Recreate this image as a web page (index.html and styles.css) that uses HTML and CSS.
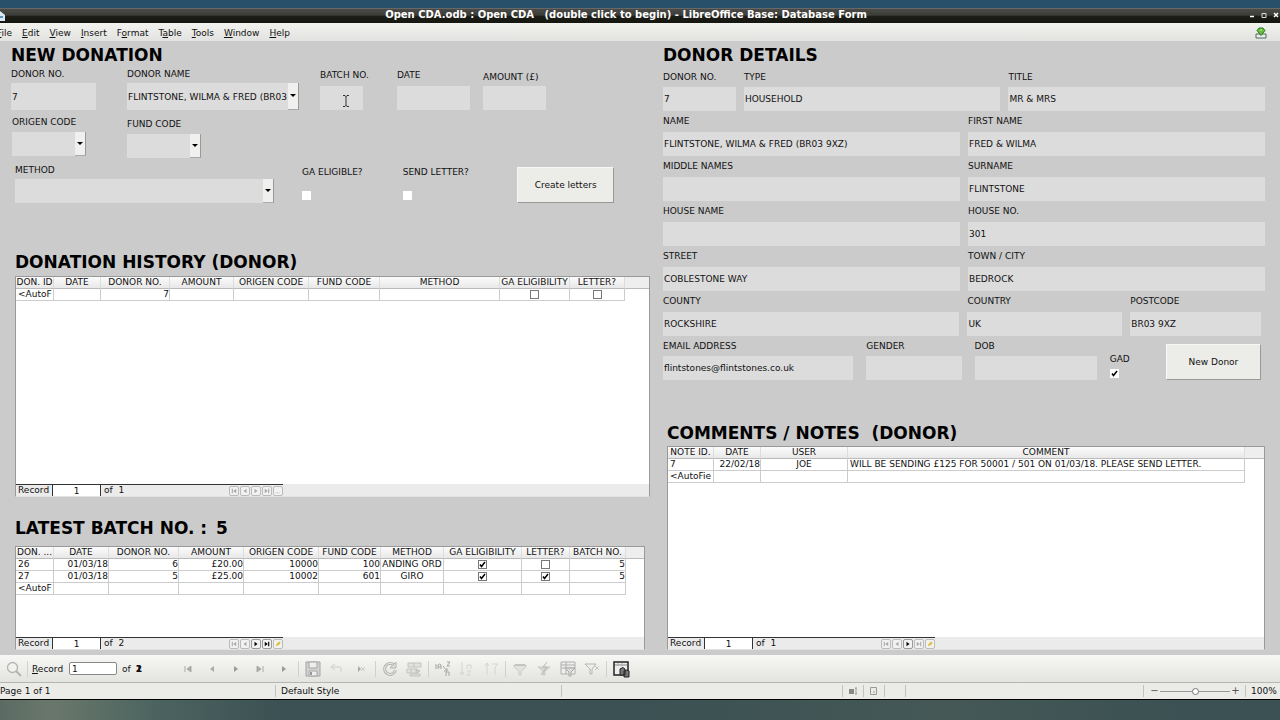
FILE: index.html
```html
<!DOCTYPE html>
<html lang="en">
<head>
<meta charset="utf-8">
<title>Open CDA</title>
<link rel="stylesheet" href="styles.css">
</head>
<body>
<svg class="defs" width="0" height="0" aria-hidden="true">
  <symbol id="first" viewBox="0 0 8 8"><path d="M1 1h1.500v6H1zM7 1v6L3 4z" fill="currentColor"/></symbol>
  <symbol id="prev" viewBox="0 0 8 8"><path d="M6 1v6L2 4z" fill="currentColor"/></symbol>
  <symbol id="next" viewBox="0 0 8 8"><path d="M2 1v6l4-3z" fill="currentColor"/></symbol>
  <symbol id="last" viewBox="0 0 8 8"><path d="M1 1v6l4-3zM5.500 1H7v6H5.500z" fill="currentColor"/></symbol>
  <symbol id="new" viewBox="0 0 8 8"><path d="M1 7l1-3 3-3h2v3L4 6z" fill="#dcc144"/></symbol>
  <symbol id="dots" viewBox="0 0 8 8"><path d="M1 6h1v1H1zM3 6h1v1H3zM5 6h1v1H5z" fill="currentColor"/></symbol>
</svg>

<header class="titlebar">
  <svg class="app-icon" viewBox="0 0 12 12" aria-hidden="true"><path d="M0 1l5 4v6H0z" fill="#dbe9f3"/><path d="M0 6h3v2H0z" fill="#5c93bb"/></svg>
  <h1 class="title">Open CDA.odb : Open CDA&nbsp;&nbsp; (double click to begin) - LibreOffice Base: Database Form</h1>
  <div class="window-buttons">
    <button aria-label="Minimise"><svg viewBox="0 0 8 8"><path d="M2 5.500h4" stroke="#fff" stroke-width="1.500"/></svg></button>
    <button aria-label="Maximise"><svg viewBox="0 0 8 8"><path d="M2 2.500h4v4H2z" fill="none" stroke="#ddd"/></svg></button>
    <button aria-label="Close"><svg viewBox="0 0 8 8"><path d="M2 2l4 4M6 2L2 6" stroke="#fff" stroke-width="1.500"/></svg></button>
  </div>
</header>

<nav class="menubar">
  <button><u>F</u>ile</button><button><u>E</u>dit</button><button><u>V</u>iew</button><button><u>I</u>nsert</button><button>F<u>o</u>rmat</button><button>T<u>a</u>ble</button><button><u>T</u>ools</button><button><u>W</u>indow</button><button><u>H</u>elp</button>
  <button class="update" aria-label="Updates"><svg viewBox="0 0 12 12"><path d="M1 7h10v4H1z" fill="#e9eee9" stroke="#4d6b62"/><path d="M4 1h4l2 2.500L6 8.500 2 3.500z" fill="#67bd3b" stroke="#2b7a28"/><path d="M5 3h2" stroke="#c7f2a0"/></svg></button>
</nav>

<main class="form">
  <section class="left">
    <h2>NEW DONATION</h2>
    <div class="row row-a">
      <div class="field f-no"><label for="dn">DONOR NO.</label><input class="tall" id="dn" value="7"></div>
      <div class="field f-name"><label for="dname">DONOR NAME</label><div class="combo tall"><select id="dname"><option>FLINTSTONE, WILMA &amp; FRED (BR03 9XZ)</option></select></div></div>
      <div class="field f-batch high"><label for="batch">BATCH NO.</label><input id="batch"><svg class="ibeam" viewBox="0 0 6 12" aria-hidden="true"><path d="M0 .5h2l1 1 1-1h2M3 1v10M0 11.500h2l1-1 1 1h2" fill="none" stroke="#333"/></svg></div>
      <div class="field f-date high"><label for="date">DATE</label><input id="date"></div>
      <div class="field f-amount"><label for="amount">AMOUNT (£)</label><input id="amount"></div>
    </div>
    <div class="row row-b">
      <div class="field f-origen"><label for="origen">ORIGEN CODE</label><div class="combo"><select id="origen"><option></option></select></div></div>
      <div class="field f-fund"><label for="fund">FUND CODE</label><div class="combo"><select id="fund"><option></option></select></div></div>
    </div>
    <div class="row row-c">
      <div class="field f-method"><label for="method">METHOD</label><div class="combo"><select id="method"><option></option></select></div></div>
      <div class="field f-ga"><label for="ga">GA ELIGIBLE?</label><input type="checkbox" id="ga"></div>
      <div class="field f-send"><label for="send">SEND LETTER?</label><input type="checkbox" id="send"></div>
      <button class="push f-create">Create letters</button>
    </div>

    <h2 class="history-title">DONATION HISTORY (DONOR)</h2>
    <div class="grid-panel history">
      <table>
        <thead><tr><th>DON. ID</th><th>DATE</th><th>DONOR NO.</th><th>AMOUNT</th><th>ORIGEN CODE</th><th>FUND CODE</th><th>METHOD</th><th>GA ELIGIBILITY</th><th>LETTER?</th><th></th></tr></thead>
        <tbody><tr><td>&lt;AutoF</td><td></td><td class="num">7</td><td></td><td></td><td></td><td></td><td class="mid"><input type="checkbox" aria-label="GA eligibility"></td><td class="mid"><input type="checkbox" aria-label="Letter"></td><td></td></tr></tbody>
      </table>
      <div class="record-bar"><div class="record-in">
        <label for="r1">Record</label><input id="r1" value="1"><span>of&nbsp; 1</span>
        <div class="record-nav"><button aria-label="First"><svg><use href="#first"/></svg></button><button aria-label="Previous"><svg><use href="#prev"/></svg></button><button aria-label="Next"><svg><use href="#next"/></svg></button><button aria-label="Last"><svg><use href="#last"/></svg></button><button aria-label="New"><svg><use href="#dots"/></svg></button></div>
      </div></div>
    </div>

    <h2 class="batch-title">LATEST BATCH NO. : <span>5</span></h2>
    <div class="grid-panel batch">
      <table>
        <thead><tr><th>DON. ...</th><th>DATE</th><th>DONOR NO.</th><th>AMOUNT</th><th>ORIGEN CODE</th><th>FUND CODE</th><th>METHOD</th><th>GA ELIGIBILITY</th><th>LETTER?</th><th>BATCH NO.</th><th></th></tr></thead>
        <tbody>
          <tr><td>26</td><td class="num">01/03/18</td><td class="num">6</td><td class="num">£20.00</td><td class="num">10000</td><td class="num">100</td><td class="mid">ANDING ORD</td><td class="mid"><input type="checkbox" checked aria-label="GA eligibility"></td><td class="mid"><input type="checkbox" aria-label="Letter"></td><td class="num">5</td><td></td></tr>
          <tr><td>27</td><td class="num">01/03/18</td><td class="num">5</td><td class="num">£25.00</td><td class="num">10002</td><td class="num">601</td><td class="mid">GIRO</td><td class="mid"><input type="checkbox" checked aria-label="GA eligibility"></td><td class="mid"><input type="checkbox" checked aria-label="Letter"></td><td class="num">5</td><td></td></tr>
          <tr><td>&lt;AutoF</td><td></td><td></td><td></td><td></td><td></td><td></td><td></td><td></td><td></td><td></td></tr>
        </tbody>
      </table>
      <div class="record-bar"><div class="record-in">
        <label for="r2">Record</label><input id="r2" value="1"><span>of&nbsp; 2</span>
        <div class="record-nav"><button aria-label="First"><svg><use href="#first"/></svg></button><button aria-label="Previous"><svg><use href="#prev"/></svg></button><button class="on" aria-label="Next"><svg><use href="#next"/></svg></button><button class="on" aria-label="Last"><svg><use href="#last"/></svg></button><button aria-label="New"><svg><use href="#new"/></svg></button></div>
      </div></div>
    </div>
  </section>

  <section class="right">
    <h2>DONOR DETAILS</h2>
    <div class="details">
      <div class="drow d1">
        <div class="field"><label for="d-no">DONOR NO.</label><input id="d-no" value="7"></div>
        <div class="field"><label for="d-type">TYPE</label><input id="d-type" value="HOUSEHOLD"></div>
        <div class="field"><label for="d-title">TITLE</label><input id="d-title" value="MR &amp; MRS"></div>
      </div>
      <div class="drow d2">
        <div class="field"><label for="d-name">NAME</label><input id="d-name" value="FLINTSTONE, WILMA &amp; FRED (BR03 9XZ)"></div>
        <div class="field"><label for="d-first">FIRST NAME</label><input id="d-first" value="FRED &amp; WILMA"></div>
        <div class="field"><label for="d-mid">MIDDLE NAMES</label><input id="d-mid"></div>
        <div class="field"><label for="d-sur">SURNAME</label><input id="d-sur" value="FLINTSTONE"></div>
        <div class="field"><label for="d-house">HOUSE NAME</label><input id="d-house"></div>
        <div class="field"><label for="d-hno">HOUSE NO.</label><input id="d-hno" value="301"></div>
        <div class="field"><label for="d-street">STREET</label><input id="d-street" value="COBLESTONE WAY"></div>
        <div class="field"><label for="d-town">TOWN / CITY</label><input id="d-town" value="BEDROCK"></div>
      </div>
      <div class="drow d3">
        <div class="field"><label for="d-county">COUNTY</label><input id="d-county" value="ROCKSHIRE"></div>
        <div class="field"><label for="d-country">COUNTRY</label><input id="d-country" value="UK"></div>
        <div class="field"><label for="d-post">POSTCODE</label><input id="d-post" value="BR03 9XZ"></div>
      </div>
      <div class="drow d4">
        <div class="field"><label for="d-mail">EMAIL ADDRESS</label><input id="d-mail" value="flintstones@flintstones.co.uk"></div>
        <div class="field"><label for="d-gender">GENDER</label><input id="d-gender"></div>
        <div class="field"><label for="d-dob">DOB</label><input id="d-dob"></div>
        <div class="field gad"><label for="d-gad">GAD</label><input type="checkbox" id="d-gad" checked></div>
        <button class="push">New Donor</button>
      </div>
    </div>

    <h2 class="notes-title">COMMENTS / NOTES&nbsp; (DONOR)</h2>
    <div class="grid-panel notes">
      <table>
        <thead><tr><th>NOTE ID.</th><th>DATE</th><th>USER</th><th>COMMENT</th><th></th></tr></thead>
        <tbody>
          <tr><td>7</td><td class="num">22/02/18</td><td class="mid">JOE</td><td>WILL BE SENDING £125 FOR 50001 / 501 ON 01/03/18. PLEASE SEND LETTER.</td><td></td></tr>
          <tr><td>&lt;AutoFie</td><td></td><td></td><td></td><td></td></tr>
        </tbody>
      </table>
      <div class="record-bar"><div class="record-in">
        <label for="r3">Record</label><input id="r3" value="1"><span>of&nbsp; 1</span>
        <div class="record-nav"><button aria-label="First"><svg><use href="#first"/></svg></button><button aria-label="Previous"><svg><use href="#prev"/></svg></button><button class="on" aria-label="Next"><svg><use href="#next"/></svg></button><button aria-label="Last"><svg><use href="#last"/></svg></button><button aria-label="New"><svg><use href="#new"/></svg></button></div>
      </div></div>
    </div>
  </section>
</main>

<div class="toolbar">
  <div class="tool-record">
    <button class="find" aria-label="Find record"><svg viewBox="0 0 16 16"><circle cx="6.500" cy="6.500" r="5" fill="#f1f2f0" stroke="#b4b4b2" stroke-width="1.300"/><path d="M10 10l5 5" stroke="#b4b4b2" stroke-width="2"/></svg></button>
    <i class="sep"></i>
    <label for="rec"><u>R</u>ecord</label><input id="rec" value="1"><span>of</span><b class="count"><span>1</span><span>2</span></b>
  </div>
  <button aria-label="First record"><svg viewBox="0 0 16 16"><path d="M5 5v6M11 5v6L7 8z" fill="#aaa" stroke="#aaa"/></svg></button>
  <button aria-label="Previous record"><svg viewBox="0 0 16 16"><path d="M10 5v6L6 8z" fill="#aaa"/></svg></button>
  <button aria-label="Next record"><svg viewBox="0 0 16 16"><path d="M6 5v6l4-3z" fill="#999"/></svg></button>
  <button aria-label="Last record"><svg viewBox="0 0 16 16"><path d="M5 5v6l4-3zM11 5v6" fill="#aaa" stroke="#aaa"/></svg></button>
  <button aria-label="New record"><svg viewBox="0 0 16 16"><path d="M6 5v6l4-3z" fill="#999"/></svg></button>
  <i class="sep"></i>
  <button aria-label="Save record"><svg viewBox="0 0 16 16"><path d="M1 1h14v14H1z" fill="#d2d3d1" stroke="#a4a5a4"/><path d="M4 1h8v6H4zM4 10h8v5H4z" fill="#eee" stroke="#a4a5a4"/><path d="M6 11v3" stroke="#999" stroke-width="2"/></svg></button>
  <button aria-label="Undo"><svg viewBox="0 0 16 16"><path d="M3 6h7q3 1 2 5M6 3L2 6l4 3" fill="none" stroke="#d9dad7" stroke-width="1.500"/></svg></button>
  <button aria-label="Delete record"><svg viewBox="0 0 16 16"><path d="M5 5v6l3-3z" fill="#aaa"/><path d="M8 6l4 4M12 6l-4 4" stroke="#ccc"/></svg></button>
  <i class="sep"></i>
  <button aria-label="Refresh"><svg viewBox="0 0 16 16"><path d="M13.500 9A5.500 5.500 0 1 1 12 4" fill="none" stroke="#b4b5b3" stroke-width="3"/><path d="M13.500 9A5.500 5.500 0 1 1 12 4" fill="none" stroke="#eee"/><path d="M14 1v6H8z" fill="#ddd" stroke="#b4b5b3"/></svg></button>
  <button aria-label="Refresh control"><svg viewBox="0 0 16 16"><path d="M2 2h13v4H2zM1 8h10v4H1zM4 13h10v2H4z" fill="#e2e2e0" stroke="#c2c3c0"/><path d="M8 2v4M5 8v4M10 8l4 2-4 3z" fill="#ccc" stroke="#c2c3c0"/></svg></button>
  <i class="sep"></i>
  <button aria-label="Sort"><svg viewBox="0 0 16 16"><path d="M1 3v5M3 8V4q2-2 3 0v4M3 6h3M8 5l4 5M12 7v3H9M12 1h3l-3 4h3M11 15v-4h3v4" fill="none" stroke="#a5a6a4"/></svg></button>
  <button aria-label="Sort ascending"><svg viewBox="0 0 16 16"><path d="M3 1v13M1 11l2 3 2-3M8 8V4h4v4M8 10h4l-4 4h4" fill="none" stroke="#d4d5d2"/></svg></button>
  <button aria-label="Sort descending"><svg viewBox="0 0 16 16"><path d="M4 14V2M2 5l2-3 2 3M9 3h6l-3 3v8" fill="none" stroke="#d4d5d2"/></svg></button>
  <i class="sep"></i>
  <button aria-label="AutoFilter"><svg viewBox="0 0 16 16"><path d="M2 4h12v2L9 10v4H7v-4L2 6z" fill="#e2e2e0" stroke="#cacbc8"/><path d="M3 4h10" stroke="#aaa"/></svg></button>
  <button aria-label="Apply filter"><svg viewBox="0 0 16 16"><path d="M2 6h12L9 10v4H7v-4z" fill="#d6d6d4" stroke="#c8c9c6"/><path d="M11 1L7 6h4l-6 8" fill="none" stroke="#b6b6b4"/></svg></button>
  <button aria-label="Form-based filters"><svg viewBox="0 0 16 16"><path d="M1 1h14v12H1zM1 4h14M1 7h14M6 1v12" fill="#eee" stroke="#b0b1ae"/><path d="M5 7h10l-4 4v4H9v-4z" fill="#ddd" stroke="#aaa"/></svg></button>
  <button aria-label="Remove filter"><svg viewBox="0 0 16 16"><path d="M1 3h11L8 8v5H6V8z" fill="#eee" stroke="#b4b5b2"/><path d="M11 5l4 4M15 5l-4 4" stroke="#c4c4c2"/></svg></button>
  <i class="sep"></i>
  <button aria-label="Data source as table"><svg viewBox="0 0 18 18"><path d="M2 2h14v13H2z" fill="#eee" stroke="#222" stroke-width="1.500"/><path d="M3 5h12" stroke="#888"/><path d="M6 3v3M10 3v3" stroke="#aaa"/><path d="M8 9q3-3 5 0v6H8zM12 11q3-2 5 0v6h-5z" fill="#777" stroke="#222"/></svg></button>
</div>

<footer class="statusbar">
  <span class="s-page">Page 1 of 1</span>
  <span class="s-style">Default Style</span>
  <span class="s-empty"></span>
  <span class="s-icon"><svg viewBox="0 0 10 10"><path d="M1 3h5v5H1z" fill="#888"/><path d="M7 2h2M8 2v6M7 8h2" stroke="#999"/></svg></span>
  <span class="s-icon"><svg viewBox="0 0 10 10"><path d="M1.500 1.500h6v7h-6z" fill="none" stroke="#999"/><path d="M4 6h2" stroke="#999"/></svg></span>
  <span class="s-icon"></span>
  <span class="s-fill"></span>
  <span class="s-zoom"><button aria-label="Zoom out">−</button><input type="range" aria-label="Zoom" value="50"><button aria-label="Zoom in">+</button></span>
  <span class="s-pct">100%</span>
</footer>
<div class="desktop"></div>
</body>
</html>
```
FILE: styles.css
```css
* { box-sizing: border-box; }
body {
  margin: 0;
  min-height: 100vh;
  display: flex;
  flex-direction: column;
  padding-top: 8px;
  background: #28506a;
  color: #111;
  font: 9px/12px "DejaVu Sans", sans-serif;
  overflow-x: hidden;
}
button, input, select { font: inherit; color: inherit; margin: 0; padding: 0; border: 0; border-radius: 0; }
button { background: none; }
svg { display: block; }
.defs { position: absolute; }

.titlebar {
  display: flex;
  align-items: center;
  height: 15px;
  border-top: 1px solid #66686a;
  background: linear-gradient(#4a4a47 0, #3c3c38 45%, #1d1e18 50%, #15160f 100%);
}
.app-icon { width: 12px; height: 12px; }
.title {
  flex: 1;
  margin: 0;
  padding: 0 8px 3px 0;
  text-align: center;
  color: #fff;
  font-size: 10px;
  font-weight: bold;
  line-height: 12px;
  white-space: nowrap;
}
.window-buttons { display: flex; width: 32px; gap: 4px; padding-bottom: 2px; }
.window-buttons button { width: 8px; height: 10px; }
.window-buttons svg { width: 8px; height: 8px; }

.menubar {
  display: flex;
  align-items: center;
  gap: 10px;
  height: 18px;
  padding: 1px 13px 0 0;
  background: linear-gradient(#f2f2ef, #e2e2e0);
}
.menubar button { line-height: 16px; white-space: nowrap; }
.menubar button:first-child { margin-left: -3px; }
.menubar .update { margin-left: auto; }
.update svg { width: 12px; height: 12px; }

.form {
  flex: 1;
  display: grid;
  grid-template-columns: 650fr 602fr;
  gap: 13px;
  padding: 2px 15px 5px 0;
  background: #cbcbcb;
}
.left, .right { display: flex; flex-direction: column; min-width: 0; }
h2 { margin: 0; font-size: 17px; line-height: 24px; font-weight: bold; color: #000; white-space: pre; }
.left > h2:first-child { padding-left: 11px; }

.row { display: flex; }
.field { position: relative; display: flex; flex-direction: column; min-width: 0; }
.field label { line-height: 18px; white-space: nowrap; }
.field input:not([type="checkbox"]), .combo {
  width: 100%;
  height: 24px;
  background: #dcdcdc;
}
.field input:not([type="checkbox"]) { padding-left: 1px; }
.field .tall.tall { height: 27px; }

.combo { position: relative; }
.combo select {
  appearance: none;
  width: 100%;
  height: 100%;
  padding-left: 1px;
  background: none;
}
.combo::after {
  content: "";
  position: absolute;
  top: 0;
  right: 0;
  bottom: 0;
  width: 10px;
  border-right: 1px solid #999;
  border-bottom: 1px solid #aaa;
  background:
    url("data:image/svg+xml,%3Csvg xmlns='http://www.w3.org/2000/svg' width='6' height='4'%3E%3Cpath d='M0 0h6L3 3z'/%3E%3C/svg%3E") center no-repeat,
    #f0f0ef;
  pointer-events: none;
}

.row-a { align-items: flex-end; height: 43px; padding-left: 11px; padding-right: 104px; }
.f-no { flex: 85 1 0; }
.f-name { flex: 172 1 0; margin-left: 31px; }
.f-batch { flex: 43 1 0; margin-left: 21px; }
.f-date { flex: 73 1 0; margin-left: 34px; }
.f-amount { flex: 63 1 0; margin-left: 13px; }
.high label { line-height: 22px; }
.ibeam { position: absolute; left: 23px; bottom: 3px; width: 6px; height: 12px; }

.row-b { margin-top: 3px; padding-left: 12px; }
.row-b .field { width: 74px; }
.f-fund { margin-left: 41px; padding-top: 2px; }
.row-b label { line-height: 19px; }

.row-c { align-items: flex-end; margin-top: 3px; padding-left: 15px; padding-right: 36px; }
.f-method { flex: 260 1 0; }
.f-ga { flex: 73 1 0; margin-left: 28px; }
.f-send { flex: 73 1 0; margin-left: 28px; }
.row-c .push { flex: 95 1 0; margin-left: 42px; }
.f-ga, .f-send { padding-bottom: 3px; }
.f-ga label, .f-send label { margin-bottom: 10px; }

.push {
  height: 36px;
  background: #ecece8;
  border: 1px solid #f7f7f5;
  border-right-color: #999;
  border-bottom-color: #999;
}

input[type="checkbox"] {
  appearance: none;
  width: 9px;
  height: 9px;
  background: #fff center / 7px 7px no-repeat;
}
input[type="checkbox"]:checked {
  background-image: url("data:image/svg+xml,%3Csvg xmlns='http://www.w3.org/2000/svg' viewBox='0 0 7 7'%3E%3Cpath d='M1 3.500l1.500 2L6 1' fill='none' stroke='%23000' stroke-width='1.500'/%3E%3C/svg%3E");
}

.history-title { margin: 47px 0 2px 15px; }
.batch-title { margin: 19px 0 6px 15px; }
.batch-title span { margin-left: 3px; }
.notes-title { margin: 41px 0 1px 4px; }

.grid-panel {
  display: flex;
  flex-direction: column;
  justify-content: space-between;
  border: 1px solid #999;
  border-bottom-color: #e2e2e2;
  background: #fff;
  overflow: hidden;
}
.history { flex: 1; margin-left: 15px; }
.batch { height: 104px; margin-left: 15px; margin-right: 5px; }
.notes { flex: 1; margin-left: 4px; }

table { width: 100%; table-layout: fixed; border-collapse: separate; border-spacing: 0; }
th, td { height: 12px; padding: 0; line-height: 11px; overflow: hidden; white-space: nowrap; text-align: left; }
th {
  font-weight: normal;
  text-align: center;
  background: linear-gradient(#fbfbfb, #e8e8e8);
  border-right: 1px solid #ddd;
  border-bottom: 1px solid #bbb;
}
td { padding: 0 1px 0 2px; border-right: 1px solid #ccc; border-bottom: 1px solid #ccc; }
th:last-child { background: #eee; border-right: 0; }
td:last-child { border: 0; }
.num { text-align: right; padding-right: 0; }
.mid { text-align: center; padding: 0; }
td input[type="checkbox"] { display: block; margin: 0 auto; border: 1px solid #777; }

.history th:nth-child(1) { width: 38px; }
.history th:nth-child(2) { width: 47px; }
.history th:nth-child(3) { width: 69px; }
.history th:nth-child(4) { width: 64px; }
.history th:nth-child(5) { width: 75px; }
.history th:nth-child(6) { width: 71px; }
.history th:nth-child(7) { width: 120px; }
.history th:nth-child(8) { width: 70px; }
.history th:nth-child(9) { width: 55px; }

.batch th:nth-child(1) { width: 38px; }
.batch th:nth-child(2) { width: 55px; }
.batch th:nth-child(3) { width: 70px; }
.batch th:nth-child(4) { width: 65px; }
.batch th:nth-child(5) { width: 75px; }
.batch th:nth-child(6) { width: 62px; }
.batch th:nth-child(7) { width: 63px; }
.batch th:nth-child(8) { width: 78px; }
.batch th:nth-child(9) { width: 48px; }
.batch th:nth-child(10) { width: 56px; }

.notes th:nth-child(1) { width: 46px; }
.notes th:nth-child(2) { width: 47px; }
.notes th:nth-child(3) { width: 87px; }
.notes th:nth-child(5) { width: 19px; }

.record-bar { background: #ebebeb; }
.record-in { display: flex; align-items: center; width: 267px; height: 12px; border-top: 1px solid #333; padding-left: 2px; }
.record-in label { width: 35px; border-right: 1px solid #333; line-height: 11px; }
.record-in > input { width: 48px; height: 11px; background: #fff; text-align: center; border-right: 1px solid #333; }
.record-in > span { padding-left: 3px; line-height: 11px; }
.record-nav { display: flex; gap: 1px; margin-left: auto; }
.record-nav button { display: grid; place-items: center; width: 10px; height: 10px; border: 1px solid #bbb; border-radius: 2px; color: #aaa; background: #f2f2f2; }
.record-nav .on { color: #000; border-color: #999; }
.record-nav svg { width: 6px; height: 6px; }

.details { display: flex; flex-direction: column; }
.drow { display: grid; align-items: end; column-gap: 8px; }
.drow label { line-height: 21px; }
.d1 { grid-template-columns: 73fr 257fr 257fr; }
.drow.d1 label, .drow.d4 label { line-height: 20px; }
.d2 { grid-template-columns: 1fr 1fr; }
.d3 { grid-template-columns: 297fr 155fr 131fr; padding-right: 4px; }
.d4 { grid-template-columns: 190fr 95fr 122fr 43fr 95fr; column-gap: 13px; padding-right: 4px; }
.gad { padding-bottom: 2px; }

.toolbar {
  display: flex;
  align-items: center;
  height: 28px;
  border-bottom: 1px solid #b5b5b3;
  background: linear-gradient(#f7f7f5, #e3e4df);
}
.toolbar > button { display: grid; place-items: center; width: 24px; height: 24px; }
.toolbar > button svg { width: 16px; height: 16px; }
.toolbar > button:last-child svg { width: 18px; height: 18px; }
.sep { width: 1px; height: 16px; margin: 0 2px; background: #d0d0cd; }
.tool-record { display: flex; align-items: center; width: 176px; }
.find { width: 25px; padding-left: 6px; }
.find svg { width: 16px; height: 16px; }
.tool-record label { margin-left: 2px; width: 37px; }
.tool-record input { width: 48px; height: 13px; padding-left: 2px; background: #fff; border: 1px solid #888; border-radius: 2px; }
.tool-record > span { margin-left: 5px; }
.count { display: grid; margin-left: 5px; }
.count span { grid-area: 1 / 1; }

.statusbar { display: flex; align-items: center; height: 17px; background: #ebebe8; border-bottom: 1px solid #000; white-space: nowrap; }
.statusbar > span { height: 12px; border-right: 1px solid #c2c2c0; }
.s-page { width: 276px; }
.s-style { width: 286px; padding-left: 5px; }
.s-empty { width: 281px; }
.s-icon { display: grid; place-items: center; width: 21px; }
.s-icon svg { width: 10px; height: 10px; }
.s-fill { flex: 1; }
.s-zoom { display: flex; align-items: center; width: 102px; padding-left: 5px; }
.s-zoom button { width: 11px; line-height: 12px; font-size: 10px; color: #555; }
.s-zoom input { appearance: none; width: 70px; height: 12px; background: linear-gradient(#999, #999) center / 100% 1px no-repeat; }
.s-zoom input::-webkit-slider-thumb { appearance: none; width: 7px; height: 7px; border: 1px solid #777; border-radius: 50%; background: #fff; }
.statusbar .s-pct { width: 34px; padding-left: 5px; border: 0; }

.desktop {
  height: 20px;
  background: linear-gradient(90deg, #5b6b64 0, #6a786b 4%, #4c6460 12%, #3b5153 22%, #3b5153 50%, #455856 74%, #3b5153 92%);
}
```
